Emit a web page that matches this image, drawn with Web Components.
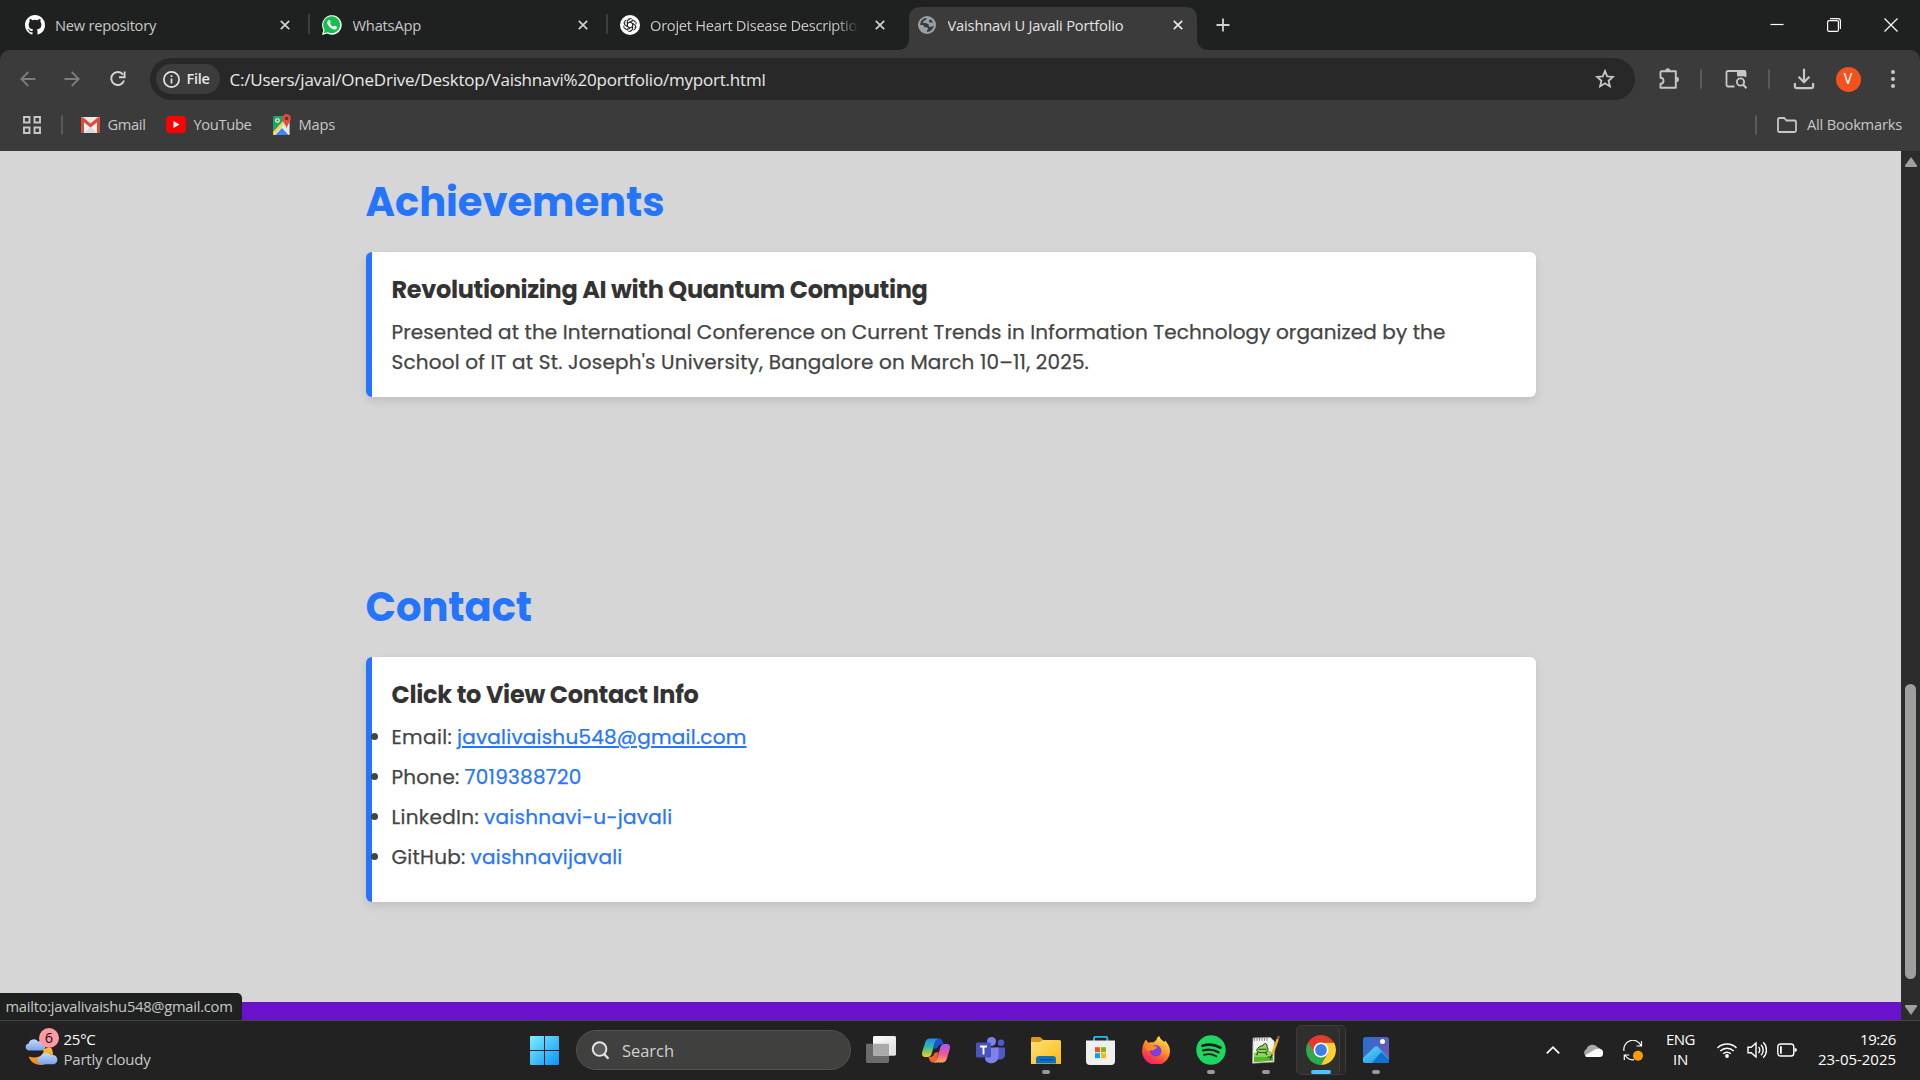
<!DOCTYPE html>
<html lang="en">
<head>
<meta charset="utf-8">
<title>Vaishnavi U Javali Portfolio</title>
<style>
html,body{margin:0;height:100%;background:#1f2120;overflow:hidden}
body{font-family:"Segoe UI","Open Sans","Noto Sans",sans-serif}
</style>
</head>
<body>
<desk-top></desk-top>
<script>
const PETAL='<path d="M7.400 11.500V6.400A2.900 2.900 0 0 1 12.600 4.600M7.400 8.500L11.300 6.200A2.900 2.900 0 0 1 15.300 7.300"/>';
const ICONS = {
github:['0 0 16 16','<path fill="#fff" d="M8 0C3.58 0 0 3.58 0 8c0 3.54 2.29 6.53 5.47 7.59.4.07.55-.17.55-.38 0-.19-.01-.82-.01-1.49-2.01.37-2.53-.49-2.69-.94-.09-.23-.48-.94-.82-1.13-.28-.15-.68-.52-.01-.53.63-.01 1.08.58 1.23.82.72 1.21 1.87.87 2.33.66.07-.52.28-.87.51-1.07-1.78-.2-3.64-.89-3.64-3.95 0-.87.31-1.59.82-2.15-.08-.2-.36-1.02.08-2.12 0 0 .67-.21 2.2.82a7.6 7.6 0 0 1 4 0c1.53-1.04 2.2-.82 2.2-.82.44 1.1.16 1.92.08 2.12.51.56.82 1.27.82 2.15 0 3.07-1.87 3.75-3.65 3.95.29.25.54.73.54 1.48 0 1.07-.01 1.93-.01 2.2 0 .21.15.46.55.38A8.01 8.01 0 0 0 16 8c0-4.42-3.58-8-8-8z"/>'],
whatsapp:['0 0 20 20','<path fill="#fff" d="M0 20l1.4-5.1A9.8 9.8 0 1 1 5.200 18.600z"/><path fill="#12c04c" d="M1.700 18.300l1-3.600a8.500 8.500 0 1 1 3 2.600z"/><path fill="#fff" d="M6.700 5.200c.4-.4 1-.4 1.200.1l.8 1.900c.1.300 0 .6-.8 1.400.8 1.500 1.900 2.500 3.500 3.200.9-1.100 1.100-1.300 1.500-1.100l1.800.9c.4.2.3 1.200-.1 1.800-.6.800-1.900 1.300-3.300.8-3-1-5-3-6-5.600-.4-1.400.4-2.800 1.400-3.400z"/>'],
openai:['0 0 20 20','<circle cx="10" cy="10" r="10" fill="#fff"/><g fill="none" stroke="#222" stroke-width=".85">'+[0,60,120,180,240,300].map(r=>`<g transform="rotate(${r} 10 10)">${PETAL}</g>`).join('')+'</g>'],
globe:['0 0 18 18','<circle cx="9" cy="9" r="9" fill="#9aa0a6"/><path fill="#3b3b3b" d="M8.700 1.800l-.9 2.300-2.100.6L4.900 7H8l2.700 1.600.3 2.200h2.300l2.500-1.200A7 7 0 0 1 9 16v-1.800l1.200-.9-.8-1.800-3-.4L5 9H2.100A7 7 0 0 1 8.700 1.800z"/><path fill="#3b3b3b" d="M12.300 3l-1.500 2 .7 1.400 2.700.2 1 1.100A7 7 0 0 0 12.300 3z"/>'],
x:['0 0 10 10','<path d="M.8.8l8.400 8.400M9.200.8L.8 9.200" stroke="currentColor" stroke-width="1.700" fill="none"/>'],
plus:['0 0 14 14','<path d="M7 .5v13M.5 7h13" stroke="#d0d0d0" stroke-width="1.800"/>'],
min:['0 0 14 14','<path d="M.5 6.500h13" stroke="#fff" stroke-width="1.200"/>'],
restore:['0 0 14 14','<path d="M3 .6h8a2.400 2.400 0 0 1 2.400 2.400v8" fill="none" stroke="#fff" stroke-width="1.200"/><rect x=".6" y="2.600" width="10.800" height="10.800" rx="1.500" fill="#1f2120" stroke="#fff" stroke-width="1.200"/>'],
close:['0 0 14 14','<path d="M.5.5l13 13M13.500.5L.5 13.500" stroke="#fff" stroke-width="1.200"/>'],
back:['0 0 16 16','<path d="M15.500 8H1.500M8.300 1L1.300 8l7 7" stroke="#7c7c7c" stroke-width="1.800" fill="none"/>'],
fwd:['0 0 16 16','<path d="M.5 8h14M7.700 1l7 7-7 7" stroke="#7c7c7c" stroke-width="1.800" fill="none"/>'],
reload:['0 0 16 16','<path d="M14 9.500A6.500 6.500 0 1 1 13 3.600" stroke="#d4d4d4" stroke-width="1.900" fill="none"/><path d="M14.600.5v5.700H9" stroke="#d4d4d4" stroke-width="1.900" fill="none"/>'],
info:['0 0 17 17','<circle cx="8.500" cy="8.500" r="7.600" stroke="#e3e3e3" stroke-width="1.700" fill="none"/><path d="M8.500 7.500v5M8.500 4.200v1.700" stroke="#e3e3e3" stroke-width="1.700"/>'],
star:['0 0 20 20','<path d="M10 2l2.200 5.400 5.800.5-4.400 3.800 1.300 5.700L10 14.300l-4.900 3.100 1.300-5.700L2 7.900l5.800-.5z" fill="none" stroke="#c7c7c7" stroke-width="1.800"/>'],
puzzle:['0 0 22 22','<path d="M3.500 3.300h14.300v16.400H2.500v-4a3 3 0 0 0 0-6V4.300a1 1 0 0 1 1-1z" fill="none" stroke="#c7c7c7" stroke-width="1.900" stroke-linejoin="round"/><path d="M7.200 2.800a2.600 2.600 0 0 1 5.200 0zM18.300 8.800a2.600 2.600 0 0 1 0 5.200z" fill="#c7c7c7"/>'],
tabsearch:['0 0 22 20','<path d="M9.500 17.500H3a1.500 1.500 0 0 1-1.500-1.500V3.500A1.500 1.500 0 0 1 3 2h16a1.500 1.500 0 0 1 1.500 1.500V8" fill="none" stroke="#c7c7c7" stroke-width="1.800"/><path d="M12 1.500h8.500v5.800H12z" fill="#c7c7c7"/><circle cx="15.500" cy="13" r="3.600" fill="#3b3b3b" stroke="#c7c7c7" stroke-width="1.900"/><path d="M18.200 15.700l3.300 3.500" stroke="#c7c7c7" stroke-width="2"/>'],
download:['0 0 22 22','<path d="M11 .8v13M5.600 8.800l5.400 5.400 5.400-5.400M1.900 15v3.300a1.900 1.900 0 0 0 1.900 1.900h14.400a1.900 1.900 0 0 0 1.900-1.900V15" fill="none" stroke="#c7c7c7" stroke-width="2.200"/>'],
dots:['0 0 6 20','<g fill="#c7c7c7"><circle cx="3" cy="3" r="2"/><circle cx="3" cy="10" r="2"/><circle cx="3" cy="17" r="2"/></g>'],
grid:['0 0 18 18','<path d="M1 1h5.500v5.500H1zM11.500 1H17v5.500h-5.500zM1 11.500h5.500V17H1zM11.500 11.500H17V17h-5.500z" fill="none" stroke="#c7c7c7" stroke-width="1.900"/>'],
gmail:['0 0 19 15','<rect width="19" height="15" rx="1" fill="#e8e8e8"/><path d="M3 15V6l6.500 5L16 6v9z" fill="#f5f5f5"/><path d="M3.200 15L9.500 9l6.300 6z" fill="#dadada"/><path d="M0 15V1.500C0 .3 1.400-.2 2.300.5L9.500 6l7.200-5.500C17.600-.2 19 .3 19 1.500V15h-3V5L9.500 9.800 3 5v10z" fill="#dd4b3e"/>'],
youtube:['0 0 20 17','<rect width="20" height="17" rx="4" fill="#f00"/><path d="M7.500 5l6 3.500-6 3.500z" fill="#fff"/>'],
maps:['0 0 18 21','<clipPath id="mc"><rect y="2" width="16.500" height="19" rx="1.500"/></clipPath><g clip-path="url(#mc)"><path fill="#1fa463" d="M0 2h17v19H0z"/><path fill="#e8e8e8" d="M17 2v19H0z"/><path fill="#4285f4" d="M2 21.500l7-7.500 7 7.500z"/><path d="M-1 21L11 8" stroke="#ffd24c" stroke-width="2.600"/><path d="M9 12.500l8 8.500" stroke="#e8e8e8" stroke-width="1.500"/></g><circle cx="4.500" cy="6.500" r="1.800" fill="none" stroke="#fff" stroke-width="1.100"/><path fill="#e04a3f" d="M13.600 0a4.200 4.200 0 0 1 4.200 4.200c0 3.500-3.200 5.600-4.200 10.300-1-4.700-4.200-6.800-4.200-10.300A4.200 4.200 0 0 1 13.600 0z"/><circle cx="13.600" cy="4.400" r="1.600" fill="#7d231c"/>'],
folder:['0 0 20 16','<path d="M1 13.500V2.500A1.500 1.500 0 0 1 2.500 1h4.700l2.300 2.500h8A1.500 1.500 0 0 1 19 5v8.500a1.500 1.500 0 0 1-1.500 1.500h-15A1.500 1.500 0 0 1 1 13.500z" fill="none" stroke="#c7c7c7" stroke-width="1.800"/>'],
up:['0 0 14 10','<path d="M7 0l6 8.500q.5 1.500-1 1.500H2Q.5 10 1 8.500z" fill="#9f9f9f"/>'],
down:['0 0 14 10','<path d="M7 10L1 1.500Q.5 0 2 0h10q1.500 0 1 1.500z" fill="#9f9f9f"/>'],
weather:['0 0 34 36','<defs><linearGradient id="wc" x2="0" y2="1"><stop stop-color="#c4dafc"/><stop offset="1" stop-color="#7ba3ea"/></linearGradient><linearGradient id="wm" x2="0" y2="1"><stop stop-color="#ffc233"/><stop offset="1" stop-color="#f07f1a"/></linearGradient></defs><path d="M4 18.500a3.800 3.800 0 0 1-.3-7.500 5.500 5.500 0 0 1 9.800-2 5 5 0 0 1 4.500 9.500z" fill="url(#wc)"/><path d="M27 16c5 8-1 18-11 18-6 0-11-4-12-9 10 3 16-2 15-8 3-1 5-1.500 8-1z" fill="url(#wm)"/><path d="M16 33a4 4 0 0 1 0-7.800 6 6 0 0 1 10.500-1.700 5 5 0 0 1 3.500 9.500z" fill="url(#wc)"/>'],
win:['0 0 29 29','<defs><linearGradient id="wg" gradientUnits="userSpaceOnUse" x1="0" y1="0" x2="29" y2="29"><stop stop-color="#7df0ff"/><stop offset="1" stop-color="#0a92fb"/></linearGradient></defs><path fill="url(#wg)" d="M0 1a1 1 0 0 1 1-1h13v14H0zM15 0h13a1 1 0 0 1 1 1v13H15zM0 15h14v14H1a1 1 0 0 1-1-1zM15 15h14v13a1 1 0 0 1-1 1H15z"/>'],
search:['0 0 20 20','<circle cx="9" cy="8.500" r="7.200" fill="#5b5b5b" stroke="#e6e6e6" stroke-width="2"/><path d="M13.800 13.800l4.600 4.800" stroke="#dfe3ee" stroke-width="2.400"/>'],
taskview:['0 0 30 29','<defs><linearGradient id="tv" x2="1" y2="1"><stop stop-color="#fff"/><stop offset="1" stop-color="#dcdcdc"/></linearGradient></defs><rect y="8" width="23" height="20" rx="1.500" fill="#6b6b6b"/><rect x="7" y="0" width="23" height="20.500" rx="1.500" fill="url(#tv)"/><path d="M7 8h16v12.500H8.500A1.500 1.500 0 0 1 7 19z" fill="#aaa"/>'],
copilot:['0 0 28 25','<defs><linearGradient id="c1" x2="0" y2="1"><stop stop-color="#1c8ff0"/><stop offset=".45" stop-color="#2fb9a8"/><stop offset="1" stop-color="#f5d013"/></linearGradient><linearGradient id="c2" x2="0" y2="1"><stop stop-color="#a855f7"/><stop offset=".55" stop-color="#f0569a"/><stop offset="1" stop-color="#ffab4a"/></linearGradient></defs><path d="M14 .5h3c2.200 0 3.200 1.500 3.700 3.200L21.500 6c-4 0-5 1-6 4l-4 1z" fill="#1a53d8"/><path d="M14 24.500h-3c-2.200 0-3.200-1.500-3.700-3.200L6.500 19c4 0 5-1 6-4l4-1z" fill="#f0652f"/><path d="M8 .5h8c-2.500 1-3 3.500-4 7l-2 7c-1 3.500-2 4.500-5 4.500H3c-3 0-3.500-2.500-2.500-6L3 5C4 1.500 5.500.5 8 .5z" fill="url(#c1)"/><path d="M20 24.500h-8c2.500-1 3-3.500 4-7l2-7C19 7 20 6 23 6h2c3 0 3.500 2.500 2.500 6L25 20c-1 3.500-2.500 4.500-5 4.500z" fill="url(#c2)"/>'],
teams:['0 0 30 27','<circle cx="25" cy="5.800" r="3.200" fill="#5059c9"/><circle cx="15.500" cy="4.500" r="4.500" fill="#7b83eb"/><path d="M20 10.500h9v7a5 5 0 0 1-9 3z" fill="#5059c9"/><path d="M9 10.500h13.500V19a7.200 7.200 0 0 1-13.500 3.500z" fill="#7b83eb"/><rect y="5.500" width="15" height="15" rx="1.500" fill="#4b53bc"/><path d="M4 9.500h7M7.500 9.500v8" stroke="#fff" stroke-width="1.900"/>'],
explorer:['0 0 30 27','<defs><linearGradient id="eg" x2="1" y2="1"><stop stop-color="#ffe07a"/><stop offset="1" stop-color="#fcb913"/></linearGradient></defs><path d="M0 1.500A1.500 1.500 0 0 1 1.500 0H9l3.500 3H13v4H0z" fill="#e09a08"/><path d="M0 5h9l3-2h16.500A1.500 1.500 0 0 1 30 4.500V27H0z" fill="url(#eg)"/><path d="M5 26.500V22a3 3 0 0 1 3-3h14a3 3 0 0 1 3 3v4.500z" fill="#0c72c6"/><path d="M9 22.700h12.500" stroke="#0a4a86" stroke-width="1.300"/>'],
store:['0 0 29 29','<path d="M8 5V2.500A1.700 1.700 0 0 1 9.700.8h10A1.700 1.700 0 0 1 21.400 2.500V5" fill="none" stroke="#26b7f2" stroke-width="1.900"/><path d="M0 4.500h29V25a4 4 0 0 1-4 4H4a4 4 0 0 1-4-4z" fill="#efefef"/><path fill="#f25022" d="M9 11.200h5v5H9z"/><path fill="#7fba00" d="M15 11.200h5v5h-5z"/><path fill="#00a4ef" d="M9 17.200h5v5H9z"/><path fill="#ffb900" d="M15 17.200h5v5h-5z"/>'],
firefox:['0 0 28 28','<defs><linearGradient id="ff" x1=".8" x2=".25" y2="1"><stop stop-color="#fff04a"/><stop offset=".4" stop-color="#ff9a2b"/><stop offset=".7" stop-color="#ff4a38"/><stop offset="1" stop-color="#e31587"/></linearGradient></defs><path d="M4 3.500l2.200 3.300C8 6 9.500 6 11 6.500L14.500 4c0-2 1-3 2.800-4 .7 3 3 4 5 6l1-1.500c3 4 4.700 6.500 4.700 10.500a14 14 0 0 1-28 0C0 10.500 2 6 4 3.500z" fill="url(#ff)"/><circle cx="13.700" cy="14.800" r="5.800" fill="#7b3fe0"/><path d="M3 10c3-3 6-2 8 0 2 .2 4 .3 4 1.400s-3 1.600-4 3c-2-.3-3-.5-4 .6-2-1-4-2-4-5z" fill="#ff8a2a"/>'],
spotify:['0 0 30 30','<circle cx="15" cy="15" r="14.700" fill="#1ed760"/><g fill="none" stroke="#1c1f1d" stroke-linecap="round"><path d="M6.500 10.800c6-1.800 12.500-1.200 18 1.900" stroke-width="2.700"/><path d="M7.200 15.400c5.200-1.500 10.500-.9 15.300 1.800" stroke-width="2.300"/><path d="M8 19.800c4.300-1.200 8.500-.8 12.300 1.500" stroke-width="1.900"/></g>'],
npp:['0 0 28 28','<path d="M1 2l17.500-.5 4 4-.5 20.500-21.500 1.300z" fill="#f1f3ec" stroke="#a5a5a5" stroke-width=".7"/><path d="M2 17Q12 12 21 16.500v8.300L2 26z" fill="#8ad656"/><path d="M2 21h19v3.800L2 26z" fill="#55b52c"/><path d="M2.500 1.500v3.300M5 1.500v3.300M7.500 1.500v3.300M10 1.500v3.300M12.500 1.500v3.300M15 1.500v3.300" stroke="#8a8a8a" stroke-width="1"/><path d="M4.500 14.500c1-3 4-5 6.500-4.800 0-1.500 1.300-2.400 2.600-2 1.600.4 2 2 1.200 3.200 1.700 1.200 1.500 3.800 0 5-3 1-8 1.300-10.300-1.400z" fill="#8fd858" stroke="#27421c" stroke-width="1"/><path d="M6 16.300l-1.500 3M13 16.300l2 2.500M6.500 13.300h8M15.500 21h3v2.500" stroke="#27421c" stroke-width="1.100" fill="none"/><path d="M25.800 3L20 19" stroke="#eeb11f" stroke-width="2.400"/><path d="M26.900 0l-1.100 3.200" stroke="#a35048" stroke-width="2.400"/><path d="M20.100 18.500l-1 3" stroke="#3b2a14" stroke-width="1.400"/>'],
chrome:['0 0 30 30','<path d="M2.010 7.500A15 15 0 0 0 15 30l6.500-11.300L15 15z" fill="#2da94f"/><path d="M27.990 7.500A15 15 0 0 1 15 30l6.500-11.300L15 7.500z" fill="#fdd02f"/><path d="M2.010 7.500L8.500 18.700 15 15V7.500h12.990A15 15 0 0 0 2.010 7.500z" fill="#e33b2e"/><circle cx="15" cy="15" r="7.500" fill="#fff"/><circle cx="15" cy="15" r="5.900" fill="#3b7fec"/>'],
photos:['0 0 26 26','<defs><linearGradient id="pg" x2="1" y2=".6"><stop stop-color="#1c74d4"/><stop offset="1" stop-color="#7355b4"/></linearGradient><linearGradient id="ph" x2="1" y2="1"><stop stop-color="#5fe0ff"/><stop offset="1" stop-color="#1487e0"/></linearGradient><clipPath id="pc"><rect width="26" height="26" rx="2.500"/></clipPath></defs><g clip-path="url(#pc)"><rect width="26" height="26" fill="url(#pg)"/><path d="M0 21L11.300 10.200q2-1.800 4 0L26 21v5H0z" fill="url(#ph)"/><path d="M9 26l6.500-8 3-2.800L26 23v3z" fill="#1173cf"/></g><circle cx="19.500" cy="4.500" r="2.500" fill="#fff"/>'],
chev:['0 0 14 8','<path d="M.8 7.300L7 1.200l6.200 6.100" fill="none" stroke="#fff" stroke-width="1.700"/>'],
cloud:['0 0 20 13','<path d="M4 12.500A4 4 0 0 1 3.500 5 6.500 6.500 0 0 1 15 3.500a4.800 4.800 0 0 1 1 9z" fill="#a9a9a9"/><path d="M2 11.500L12 5.500A6 6 0 0 1 16.500 5a4 4 0 0 1-.5 8H4q-1.500 0-2-1.500z" fill="#fff"/>'],
sync:['0 0 20 21','<path d="M1 11A9 9 0 0 1 18 5.500M18.500 1v5h-5M11 19.700A9 9 0 0 1 2 15M1.300 20v-5h5" fill="none" stroke="#fff" stroke-width="1.200"/><circle cx="15" cy="15.700" r="5" fill="#ff9c00"/>'],
wifi:['0 0 20 16','<g fill="none" stroke="#fff" stroke-width="1.500"><path d="M.5 6a13.500 13.500 0 0 1 19 0"/><path d="M3.300 9a9.500 9.500 0 0 1 13.400 0"/><path d="M6.200 11.800a5.400 5.400 0 0 1 7.600 0"/></g><circle cx="10" cy="14" r="1.900" fill="#fff"/>'],
sound:['0 0 20 18','<g fill="none" stroke="#fff" stroke-width="1.400"><path d="M1 6.300h3.200L9 2v14l-4.800-4.300H1z"/><path d="M11.500 6a4.200 4.200 0 0 1 0 6M14 3.700a7.500 7.500 0 0 1 0 10.600M16.300 1.300a11 11 0 0 1 0 15.400"/></g>'],
battery:['0 0 20 14','<rect x=".8" y="1" width="16" height="12" rx="2.800" fill="none" stroke="#fff" stroke-width="1.400"/><path d="M3 3.200h1.800v7.600H3z" fill="#fff"/><path d="M17.500 5v4q2.500 0 2.500-2t-2.500-2z" fill="#fff"/>']
};

/* Base class: renders a template string into an open shadow root once. */
class Base extends HTMLElement{
  connectedCallback(){
    if(this.shadowRoot) return;
    this.attachShadow({mode:'open'}).innerHTML = this.render();
    this.ready && this.ready();
  }
  a(n,d=''){return this.getAttribute(n) ?? d}
}

/* Single line of text tracked so that it spans exactly w pixels. */
class FitText extends Base{
  render(){
    const u=this.hasAttribute('underlined')?'text-decoration:underline;text-decoration-thickness:2px;text-underline-offset:2px':'';
    return `<style>:host{display:block;flex:none;white-space:nowrap;width:${this.a('w')}px;overflow:visible}span{display:inline-block;${u}}</style><span><slot></slot></span>`}
  ready(){this.fit();requestAnimationFrame(()=>this.fit())}
  fit(){
    const s=this.shadowRoot.querySelector('span'),n=this.textContent.length,w=+this.a('w');
    s.style.letterSpacing='0px';
    const r=s.getBoundingClientRect().width;
    if(r) s.style.letterSpacing=((w-r)/n)+'px';
  }
}
/* m = space before the icon. */
class UiIcon extends Base{
  render(){
    const [vb,b]=ICONS[this.a('name')];
    return `<style>:host{display:block;flex:none;width:${this.a('w')}px;height:${this.a('h')}px;margin-left:${this.a('m','0')}px}svg{display:block;width:100%;height:100%}</style><svg viewBox="${vb}" preserveAspectRatio="none">${b}</svg>`}
}
class VSep extends Base{
  render(){return `<style>:host{display:block;flex:none;width:2px;height:20px;border-radius:1px;background:${this.a('c','#5a5a5a')};margin-left:${this.a('m','0')}px}</style>`}
}
class BrowserTab extends Base{
  render(){
    const act=this.hasAttribute('active');
    return `<style>
:host{display:flex;position:relative;align-items:center;flex:none;width:297.500px;height:50px;box-sizing:border-box;font-size:14.700px;color:${act?'#e3e3e3':'#c7c7c7'}}
.bg{position:absolute;left:-5px;top:7px;width:309px;height:43px}
.ic{width:43.500px;padding-left:13px;box-sizing:border-box;flex:none;position:relative}
.t{width:213px;flex:none;overflow:hidden;line-height:30px;position:relative;${this.hasAttribute('fade')?'width:210px;-webkit-mask-image:linear-gradient(90deg,#000 186px,transparent 209px);margin-right:3px;':''}}
.c{margin-left:12px;position:relative;flex:none;color:${act?'#e8e8e8':'#d0d0d0'}}
.s{position:absolute;right:-1px;top:14px}
</style>
${act?'<svg class="bg" viewBox="0 0 309 43"><path fill="#3b3b3b" d="M0 43Q10 42 10 31V12Q10 0 22 0H286Q298 0 298 12V31Q298 42 309 43z"/></svg>':''}
<div class="ic"><slot name="icon"></slot></div><div class="t"><slot></slot></div><ui-icon class="c" name="x" w="10" h="10"></ui-icon>
${this.hasAttribute('sep')?'<v-sep class="s" c="#3d3f3e"></v-sep>':''}`}
}
class TabStrip extends Base{
  render(){return `<style>:host{display:flex;height:50px;padding-left:11.500px;align-items:center;background:#1f2120}
.w{margin-left:auto;display:flex;align-items:center;padding-right:22px;gap:43px;padding-bottom:1px}</style>
<browser-tab sep><ui-icon slot="icon" name="github" w="20" h="20"></ui-icon><fit-text w="101">New repository</fit-text></browser-tab>
<browser-tab sep><ui-icon slot="icon" name="whatsapp" w="20" h="20"></ui-icon><fit-text w="68.500">WhatsApp</fit-text></browser-tab>
<browser-tab fade><ui-icon slot="icon" name="openai" w="20" h="20"></ui-icon><fit-text w="207">Orojet Heart Disease Descriptio</fit-text></browser-tab>
<browser-tab active><ui-icon slot="icon" name="globe" w="18" h="18" m="1"></ui-icon><fit-text w="176">Vaishnavi U Javali Portfolio</fit-text></browser-tab>
<ui-icon name="plus" w="14" h="14" m="14"></ui-icon>
<div class="w"><ui-icon name="min" w="14" h="14"></ui-icon><ui-icon name="restore" w="14" h="14"></ui-icon><ui-icon name="close" w="14" h="14"></ui-icon></div>`}
}
class ToolBar extends Base{
  render(){return `<style>:host{display:flex;height:58px;align-items:center;background:#3b3b3b;border-radius:10px 10px 0 0;box-sizing:border-box}
.url{display:flex;align-items:center;width:1485px;height:42px;border-radius:21px;background:#282828;margin-left:24.500px;box-sizing:border-box;padding-left:6px;color:#e8e8e8;font-size:17px;flex:none}
.chip{display:flex;align-items:center;width:64px;height:30px;border-radius:15px;background:#3c3c3c;padding-left:7px;box-sizing:border-box;gap:6.500px;font-size:14.500px;line-height:20px;font-weight:600;color:#e8e8e8;margin-right:9.500px}
.chip fit-text{padding-bottom:1px}
.star{margin-left:auto;padding-right:20px}
.av{width:25px;height:25px;border-radius:50%;background:#f4511e;color:#fff;font:14px/25px Roboto,sans-serif;text-align:center;margin-left:21px;flex:none}</style>
<ui-icon name="back" w="16" h="16" m="20"></ui-icon><ui-icon name="fwd" w="16" h="16" m="28"></ui-icon><ui-icon name="reload" w="16" h="16" m="29.500"></ui-icon>
<div class="url"><div class="chip"><ui-icon name="info" w="17" h="17"></ui-icon><fit-text w="23">File</fit-text></div><fit-text w="536">C:/Users/javal/OneDrive/Desktop/Vaishnavi%20portfolio/myport.html</fit-text><ui-icon class="star" name="star" w="20" h="20"></ui-icon></div>
<ui-icon name="puzzle" w="22" h="22" m="22.500"></ui-icon><v-sep m="20.500"></v-sep><ui-icon name="tabsearch" w="22" h="20" m="22.500"></ui-icon><v-sep m="21"></v-sep><ui-icon name="download" w="22" h="22" m="23"></ui-icon><div class="av">V</div><ui-icon name="dots" w="6" h="20" m="29"></ui-icon>`}
}
class BookmarkBar extends Base{
  render(){return `<style>:host{display:flex;height:43px;box-sizing:border-box;align-items:center;background:#3b3b3b;font-size:14.700px;color:#c7c7c7;line-height:24px;padding-bottom:10px}
.r{margin-left:auto;display:flex;align-items:center;padding-right:18px}fit-text{margin-left:8px;padding-bottom:1px}</style>
<ui-icon name="grid" w="18" h="18" m="23"></ui-icon><v-sep m="19.500"></v-sep>
<ui-icon name="gmail" w="19" h="16" m="18"></ui-icon><fit-text w="38">Gmail</fit-text>
<ui-icon name="youtube" w="20" h="17" m="20"></ui-icon><fit-text w="58">YouTube</fit-text>
<ui-icon name="maps" w="18" h="21" m="21"></ui-icon><fit-text w="36.500">Maps</fit-text>
<div class="r"><v-sep></v-sep><ui-icon name="folder" w="20" h="16" m="20"></ui-icon><fit-text style="margin-left:10px" w="95">All Bookmarks</fit-text></div>`}
}
class ScrollBar extends Base{
  render(){return `<style>:host{display:flex;flex-direction:column;align-items:center;width:19px;background:#2c2c2c;box-sizing:border-box;padding:6px 0 5px}
.th{width:11px;height:295px;border-radius:6px;background:#9f9f9f;margin:auto 0 26px}</style><ui-icon name="up" w="14" h="10"></ui-icon><div class="th"></div><ui-icon name="down" w="14" h="10"></ui-icon>`}
}
class InfoCard extends Base{
  render(){return `<style>:host{display:block;box-sizing:border-box;background:#fff;border-left:6px solid #2575fc;border-radius:6px;box-shadow:0 4px 10px rgba(0,0,0,.1);padding:20px 20px 19px;color:#444;font-size:20px;line-height:30px;-webkit-text-stroke:.25px currentColor}
h3{margin:0 0 9px;font-size:24px;line-height:36px;font-weight:700;color:#333;-webkit-text-stroke:0}</style><h3><fit-text w="${this.a('hw')}">${this.a('heading')}</fit-text></h3><slot></slot>`}
}
class ContactItem extends Base{
  render(){return `<style>:host{display:flex;align-items:center;height:30px;margin:0 0 10px -21px}
i{width:7px;height:7px;border-radius:50%;background:#444;margin:0 14px 1px 0}
.v{margin-left:5px;color:#2575fc}</style>
<i></i><fit-text w="${this.a('lw')}">${this.a('label')}</fit-text><fit-text class="v" w="${this.a('vw')}" ${this.hasAttribute('hovered')?'underlined':''}>${this.a('value')}</fit-text>`}
}
class PortfolioPage extends Base{
  render(){return `<style>:host{display:flex;flex-direction:column;flex:1;background:#d6d6d6;font-family:Poppins,Inter,sans-serif;overflow:hidden}
main{width:1170px;margin:0 auto;padding:21px 0 0;flex:1}
h2{margin:0 0 20px;font-size:40px;line-height:60px;font-weight:700;color:#2575fc}
.one{height:145px;margin-bottom:180px}.two{height:245px}
footer{height:18px;background:#6a11cb}</style>
<main><h2><fit-text w="299">Achievements</fit-text></h2>
<info-card class="one" heading="Revolutionizing AI with Quantum Computing" hw="536">
<fit-text w="1054">Presented at the International Conference on Current Trends in Information Technology organized by the</fit-text><fit-text w="697.500">School of IT at St. Joseph's University, Bangalore on March 10–11, 2025.</fit-text></info-card>
<h2><fit-text w="166.500">Contact</fit-text></h2>
<info-card class="two" heading="Click to View Contact Info" hw="307">
<contact-item label="Email:" lw="60.500" value="javalivaishu548@gmail.com" vw="289.500" hovered></contact-item>
<contact-item label="Phone:" lw="68" value="7019388720" vw="117"></contact-item>
<contact-item label="LinkedIn:" lw="87.500" value="vaishnavi-u-javali" vw="188.500"></contact-item>
<contact-item label="GitHub:" lw="74" value="vaishnavijavali" vw="152"></contact-item></info-card></main><footer></footer>`}
}
class StatusBubble extends Base{
  render(){return `<style>:host{display:block;position:absolute;left:0;bottom:0;width:242px;height:27px;box-sizing:border-box;padding-left:5.500px;background:#1f2120;border-radius:0 5px 0 0;color:#c7c7c7;font-size:14.700px;line-height:27px}</style><fit-text w="227">${this.a('text')}</fit-text>`}
}
class TaskApp extends Base{
  render(){const s=this.a('state');return `<style>:host{display:flex;flex-direction:column;align-items:center;flex:none;width:55.100px;height:59px;position:relative}
.b{flex:none;height:50px;margin-top:4px;display:flex;align-items:center;justify-content:center;width:50px;box-sizing:border-box;position:relative}
.front,.back{position:absolute;top:0;height:50px;border:1px solid #3c3c3a;border-radius:5px;box-sizing:border-box}
.front{left:0;width:44px;background:#2f2f2d}
.back{left:8px;width:42px;background:#282827}
ui-icon{position:relative}
.i{width:8px;height:4px;border-radius:2px;background:#9a9a9a;margin-top:-5px;position:relative}
.i.on{width:20px;background:#4cc2ff}</style><div class="b">${s=='on'?'<div class="back"></div><div class="front"></div>':''}<ui-icon name="${this.a('name')}" w="${this.a('w')}" h="${this.a('h')}"></ui-icon></div>${s?`<div class="i ${s}"></div>`:''}`}
}
class TaskBar extends Base{
  render(){return `<style>:host{display:flex;height:60px;box-sizing:border-box;border-top:1px solid #454545;background:#212221;align-items:center;color:#fff;font-size:15px;line-height:20px}
.wx{display:flex;width:505px;padding-left:25px;align-items:center;box-sizing:border-box;flex:none;gap:5.500px;position:relative;padding-bottom:3px}
.wx .l2{color:#c9c9c9}.bd{position:absolute;left:39px;top:-1px;width:20px;height:20px;border-radius:50%;background:#ff99a4;color:#111;font-size:14.500px;text-align:center;line-height:20px}
.wx ui-icon{padding-top:1px}
.pill{display:flex;align-items:center;width:275px;height:40px;border-radius:20px;background:#40403f;border:1px solid #525252;box-sizing:border-box;padding-left:14px;gap:12px;color:#d0d0d0;font-size:16.500px;margin:0 2px 1px 17px;flex:none;line-height:26px}
.pill fit-text{padding-top:1px}
.apps{display:flex}
.tray{display:flex;margin-left:auto;align-items:center;padding-right:24px}
.tray>ui-icon{margin-bottom:1px;position:relative;left:-1px}
.tx,.clk{padding-bottom:3px}
fit-text{margin:0 auto}.clk fit-text{margin:0 0 0 auto}</style>
<div class="wx"><ui-icon name="weather" w="33" h="34"></ui-icon><div><fit-text style="margin:0" w="32">25°C</fit-text><fit-text class="l2" style="margin:0" w="87">Partly cloudy</fit-text></div><span class="bd">6</span></div>
<ui-icon name="win" w="29" h="29" m="25"></ui-icon>
<div class="pill"><ui-icon name="search" w="19" h="19"></ui-icon><fit-text style="margin:0" w="52">Search</fit-text></div>
<div class="apps"><task-app name="taskview" w="30" h="28"></task-app><task-app name="copilot" w="28" h="25"></task-app><task-app name="teams" w="30" h="27"></task-app><task-app name="explorer" w="30" h="27" state="run"></task-app><task-app name="store" w="29" h="29"></task-app><task-app name="firefox" w="28" h="28"></task-app><task-app name="spotify" w="30" h="30" state="run"></task-app><task-app name="npp" w="28" h="28" state="run"></task-app><task-app name="chrome" w="30" h="30" state="on"></task-app><task-app name="photos" w="26" h="26" state="run"></task-app></div>
<div class="tray"><ui-icon name="chev" w="14" h="8"></ui-icon><ui-icon name="cloud" w="20" h="13" m="23"></ui-icon><ui-icon name="sync" w="20" h="21" m="20"></ui-icon>
<div class="tx" style="margin-left:22.500px"><fit-text w="29">ENG</fit-text><fit-text w="15">IN</fit-text></div>
<ui-icon name="wifi" w="20" h="16" m="23"></ui-icon><ui-icon name="sound" w="20" h="18" m="10"></ui-icon><ui-icon name="battery" w="20" h="14" m="10"></ui-icon>
<div class="clk" style="margin-left:20px"><fit-text w="36">19:26</fit-text><fit-text w="78">23-05-2025</fit-text></div></div>`}
}
class DeskTop extends Base{
  render(){return `<style>:host{display:flex;flex-direction:column;width:1920px;height:1080px;overflow:hidden;background:#1f2120}
.view{display:flex;flex:1;position:relative;min-height:0}</style>
<tab-strip></tab-strip><tool-bar></tool-bar><bookmark-bar></bookmark-bar>
<div class="view"><portfolio-page></portfolio-page><scroll-bar></scroll-bar><status-bubble text="mailto:javalivaishu548@gmail.com"></status-bubble></div><task-bar></task-bar>`}
}
Object.entries({'fit-text':FitText,'ui-icon':UiIcon,'v-sep':VSep,'browser-tab':BrowserTab,'tab-strip':TabStrip,'tool-bar':ToolBar,'bookmark-bar':BookmarkBar,'scroll-bar':ScrollBar,'contact-item':ContactItem,'info-card':InfoCard,'portfolio-page':PortfolioPage,'status-bubble':StatusBubble,'task-app':TaskApp,'task-bar':TaskBar,'desk-top':DeskTop}).forEach(([n,c])=>customElements.define(n,c));
</script>
</body>
</html>
